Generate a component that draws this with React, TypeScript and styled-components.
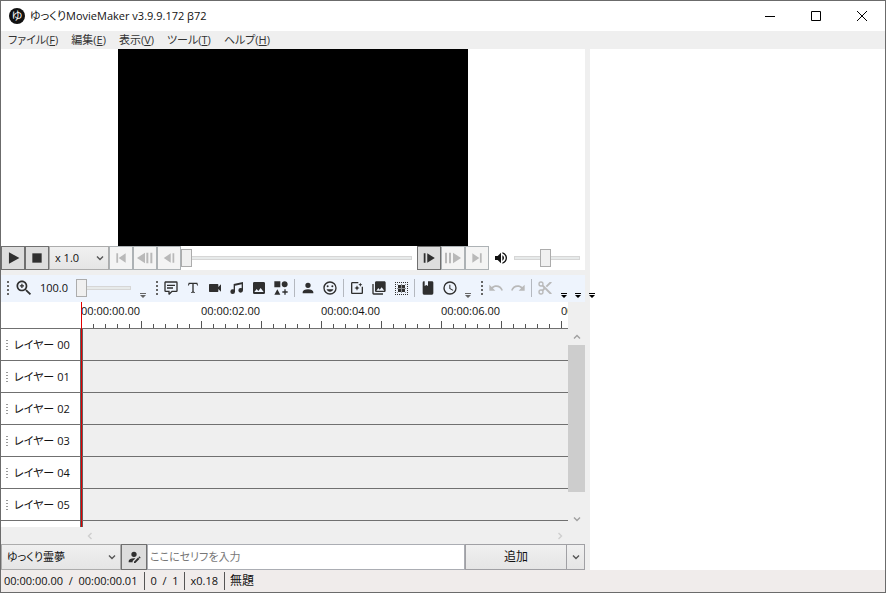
import React from 'react';
import styled, { createGlobalStyle, css } from 'styled-components';

const INK = '#2f2f2f';
const FADED = '#b9b9b9';

const GlobalStyle = createGlobalStyle`
  *, *::before, *::after { box-sizing: border-box; }
  body { margin: 0; }
  button, input, select { font: inherit; color: inherit; margin: 0; padding: 0; border-radius: 0; outline: none; }
`;

const Window = styled.div`
  display: flex;
  flex-direction: column;
  min-height: 100vh;
  border: 1px solid #6b6b6b;
  background: #fff;
  color: #111;
  font-family: 'Open Sans', 'Noto Sans CJK JP', sans-serif;
  font-size: 11px;
  line-height: 16px;
  font-feature-settings: 'palt';
  overflow: hidden;
`;

const TitleBar = styled.header`
  display: flex;
  align-items: center;
  height: 30px;
  padding-left: 8px;
  gap: 5px;
`;

const Title = styled.h1`
  flex: 1;
  margin: 0;
  font-size: 11px;
  font-weight: 400;
  white-space: nowrap;
`;

const Logo = styled.span`
  display: grid;
  place-items: center;
  width: 16px;
  height: 16px;
  border-radius: 50%;
  background: #111;
  color: #fff;
  font-size: 11px;
  line-height: 16px;
`;

const CaptionButton = styled.button`
  display: grid;
  place-items: center;
  width: 46px;
  height: 30px;
  border: 0;
  background: transparent;
`;

const CaptionGroup = styled.div`
  display: flex;
`;

const MenuBar = styled.nav`
  display: flex;
  align-items: center;
  gap: 13px;
  height: 18px;
  padding-left: 7px;
  background: #efefef;
`;

const MenuItem = styled.button`
  border: 0;
  background: transparent;
  color: #333;
  white-space: nowrap;
  line-height: 18px;
`;

const Workspace = styled.main`
  flex: 1;
  display: grid;
  grid-template-columns: minmax(0, 584fr) 5px minmax(0, 295fr);
`;

const Editor = styled.div`
  display: flex;
  flex-direction: column;
  min-width: 0;
  background: #efefef;
`;

const Splitter = styled.div`
  background: #efefef;
`;

const Properties = styled.aside`
  background: #fff;
`;

const Preview = styled.div`
  display: flex;
  justify-content: center;
  background: #fff;
`;

const Screen = styled.div`
  height: 197px;
  aspect-ratio: 16 / 9;
  background: #000;
`;

const Transport = styled.div`
  display: flex;
  align-items: center;
  height: 24px;
  margin-bottom: 5px;
  padding-right: 5px;
  background: #fff;
`;

const TransportButton = styled.button`
  display: grid;
  place-items: center;
  flex: none;
  width: 24px;
  height: 24px;
  border: 1px solid #707070;
  background: #ddd;
  color: ${INK};
  &:disabled {
    border-color: #adb2b5;
    background: #f4f4f4;
    color: ${FADED};
  }
`;

const SelectBox = styled.span<{ $w: number }>`
  position: relative;
  display: flex;
  flex: none;
  align-self: stretch;
  width: ${p => p.$w}px;
  & > svg {
    position: absolute;
    right: 5px;
    top: 0;
    bottom: 0;
    margin: auto;
    color: #555;
    pointer-events: none;
  }
`;

const Select = styled.select`
  appearance: none;
  width: 100%;
  padding-left: 5px;
  border: 1px solid #acacac;
  background: linear-gradient(#f0f0f0, #e5e5e5);
`;

const Range = styled.input<{ $w?: number }>`
  appearance: none;
  height: 18px;
  min-width: 0;
  background: transparent;
  ${p => (p.$w ? css`flex: none; width: ${p.$w}px;` : css`flex: 1;`)}
  &::-webkit-slider-runnable-track {
    height: 4px;
    border: 1px solid #d6d6d6;
    background: #e7eaea;
  }
  &::-webkit-slider-thumb {
    appearance: none;
    width: 11px;
    height: 18px;
    margin: -8px -1px 0;
    border: 1px solid #acacac;
    background: #f0f0f0;
  }
`;

const Seek = styled.div`
  display: flex;
  flex: 1;
  padding-right: 5px;
`;

const Volume = styled.div`
  display: flex;
  align-items: center;
  gap: 5px;
  padding-left: 4px;
`;

const ToolBar = styled.div`
  position: relative;
  z-index: 1;
  display: flex;
  align-items: center;
  height: 27px;
  padding-bottom: 1px;
  background: #eef4fd;
  white-space: nowrap;
  & > * { flex: none; }
`;

const Grip = styled.span`
  width: 10px;
  height: 14px;
  padding-left: 6px;
  &::before {
    content: '';
    display: block;
    width: 2px;
    height: 14px;
    background: repeating-linear-gradient(#666 0 2px, transparent 2px 4px);
  }
`;

const ToolButton = styled.button`
  display: grid;
  place-items: center;
  width: 22px;
  height: 22px;
  border: 0;
  background: transparent;
  color: ${INK};
  &:disabled { color: ${FADED}; }
`;

const ZoomGroup = styled.label`
  display: flex;
  align-items: center;
  width: 125px;
  padding-left: 2px;
`;

const ZoomValue = styled.span`
  width: 41px;
  padding-left: 5px;
`;

const Divider = styled.span`
  width: 5px;
  height: 18px;
  padding-left: 2px;
  &::before {
    content: '';
    display: block;
    width: 1px;
    height: 18px;
    background: #b4b8bf;
  }
`;

const OverflowButton = styled.button<{ $dark?: boolean }>`
  display: flex;
  align-items: flex-end;
  justify-content: center;
  width: 14px;
  height: 22px;
  border: 0;
  background: transparent;
  color: ${p => (p.$dark ? '#000' : '#666')};
`;

const OverflowRow = styled.div`
  display: flex;
  padding-left: 1px;
`;

const Timeline = styled.section`
  flex: 1;
  display: grid;
  grid-template-columns: minmax(0, 1fr) 17px;
  grid-template-rows: minmax(225px, 1fr) 17px;
`;

const Tracks = styled.div`
  display: grid;
  grid-template-columns: 79px minmax(0, 1fr);
  grid-template-rows: 27px repeat(6, 32px) minmax(6px, 1fr);
  position: relative;
  overflow: hidden;
`;

const Corner = styled.div`
  background: #fff;
  border-bottom: 1px solid #707070;
`;

const Ruler = styled.div`
  display: flex;
  overflow: hidden;
  padding-left: 1px;
  background: #fff;
  border-bottom: 1px solid #707070;
`;

const RulerSpan = styled.div`
  display: flex;
  flex: none;
  flex-direction: column;
  justify-content: space-between;
  width: 120px;
  line-height: 18px;
`;

const Ticks = styled.div`
  display: flex;
  align-items: flex-end;
  height: 7px;
`;

const Tick = styled.span<{ $major: boolean }>`
  width: 12px;
  height: ${p => (p.$major ? 7 : 4)}px;
  border-left: 1px solid #555;
`;

const LayerHead = styled.div`
  display: flex;
  align-items: center;
  gap: 6px;
  padding-left: 5px;
  background: #fff;
  border-bottom: 1px solid #707070;
  white-space: nowrap;
  &::before {
    content: '';
    width: 2px;
    height: 10px;
    background: repeating-linear-gradient(#999 0 1px, transparent 1px 3px);
  }
`;

const Lane = styled.div`
  border-bottom: 1px solid #707070;
  border-left: 3px solid #606060;
`;

const LastHead = styled.div`
  background: #fff;
`;

const LastLane = styled.div`
  border-left: 3px solid #606060;
`;

const Playhead = styled.div`
  position: absolute;
  left: 80px;
  top: 0;
  bottom: 0;
  width: 1px;
  background: #e00000;
`;

const VScroll = styled.div`
  display: flex;
  flex-direction: column;
  padding-top: 26px;
`;

const VTrack = styled.div`
  flex: 1;
  display: flex;
  flex-direction: column;
  padding-bottom: 18px;
`;

const VThumb = styled.div`
  flex: 1;
  background: #cdcdcd;
`;

const HScroll = styled.div`
  display: flex;
  justify-content: space-between;
  padding-left: 80px;
`;

const ScrollButton = styled.button<{ $faint?: boolean }>`
  display: grid;
  place-items: center;
  width: 17px;
  height: 17px;
  border: 0;
  background: transparent;
  color: ${p => (p.$faint ? '#cfcfcf' : '#a0a0a0')};
`;

const SpeechRow = styled.form`
  display: flex;
  height: 26px;
`;

const SpeechInput = styled.input`
  flex: 1;
  min-width: 0;
  padding-left: 2px;
  border: 1px solid #abadb3;
  background: #fff;
  font-feature-settings: 'palt';
  &::placeholder { color: #777; opacity: 1; }
`;

const EditVoice = styled.button`
  display: grid;
  place-items: center;
  width: 26px;
  border: 1px solid #707070;
  background: #ddd;
  color: ${INK};
`;

const AddButton = styled.button<{ $w: number }>`
  display: grid;
  place-items: center;
  width: ${p => p.$w}px;
  border: 1px solid #a0a0a4;
  background: linear-gradient(#f0f0f0, #e5e5e5);
  font-size: 12px;
  & + & { border-left: 0; color: #555; }
`;

const StatusBar = styled.footer`
  display: flex;
  align-items: center;
  height: 22px;
  background: #f0eceb;
  white-space: pre;
`;

const StatusItem = styled.span<{ $title?: boolean }>`
  padding: 0 7px 0 3px;
  line-height: 18px;
  font-size: ${p => (p.$title ? 12 : 11)}px;
  & + & { border-left: 1px solid #555; padding: 0 6px 0 5px; }
`;

const ICONS = {
  zoom: 'M15.5 14h-.79l-.28-.27C15.41 12.59 16 11.11 16 9.5 16 5.91 13.09 3 9.5 3S3 5.91 3 9.5 5.91 16 9.5 16c1.61 0 3.09-.59 4.23-1.57l.27.28v.79l5 4.99L20.49 19l-4.99-5zm-6 0C7.01 14 5 11.99 5 9.5S7.01 5 9.5 5 14 7.01 14 9.5 11.99 14 9.5 14zM10.250 7h-1.500v1.750H7v1.500h1.750V12h1.500v-1.750H12v-1.500h-1.750z',
  comment: 'M9,22A1,1 0 0,1 8,21V18H4A2,2 0 0,1 2,16V4C2,2.89 2.9,2 4,2H20A2,2 0 0,1 22,4V16A2,2 0 0,1 20,18H13.9L10.2,21.71C10,21.9 9.75,22 9.5,22V22H9M10,16V19.08L13.08,16H20V4H4V16H10M6,7H18V9H6V7M6,11H15V13H6V11Z',
  text: 'M18.5,4L19.66,8.35L18.7,8.61C18.25,7.74 17.79,6.87 17.26,6.43C16.73,6 16.11,6 15.5,6H13V16.5C13,17 13,17.5 13.33,17.75C13.67,18 14.33,18 15,18V19H9V18C9.67,18 10.33,18 10.67,17.75C11,17.5 11,17 11,16.5V6H8.5C7.89,6 7.27,6 6.74,6.43C6.21,6.87 5.75,7.74 5.3,8.61L4.34,8.35L5.5,4H18.5Z',
  video: 'M17,10.5V7A1,1 0 0,0 16,6H4A1,1 0 0,0 3,7V17A1,1 0 0,0 4,18H16A1,1 0 0,0 17,17V13.5L21,17.5V6.5L17,10.5Z',
  music: 'M21,3V15.5A3.5,3.5 0 0,1 17.5,19A3.5,3.5 0 0,1 14,15.5A3.5,3.5 0 0,1 17.5,12C18.04,12 18.55,12.12 19,12.34V6.47L9,8.6V17.5A3.5,3.5 0 0,1 5.5,21A3.5,3.5 0 0,1 2,17.5A3.5,3.5 0 0,1 5.5,14C6.04,14 6.55,14.12 7,14.34V6L21,3Z',
  image: 'M8.5,13.5L11,16.5L14.5,12L19,18H5M21,19V5C21,3.89 20.1,3 19,3H5A2,2 0 0,0 3,5V19A2,2 0 0,0 5,21H19A2,2 0 0,0 21,19Z',
  shape: 'M2,2H11V11H2V2M17.5,2C20,2 22,4 22,6.5C22,9 20,11 17.5,11C15,11 13,9 13,6.5C13,4 15,2 17.5,2M6.5,14L11,22H2L6.5,14M19,17H22V19H19V22H17V19H14V17H17V14H19V17Z',
  person: 'M12,4A4,4 0 0,1 16,8A4,4 0 0,1 12,12A4,4 0 0,1 8,8A4,4 0 0,1 12,4M12,14C16.42,14 20,15.79 20,18V20H4V18C4,15.79 7.58,14 12,14Z',
  face: 'M12,17.5C14.33,17.5 16.3,16.04 17.11,14H6.89C7.69,16.04 9.67,17.5 12,17.5M8.5,11A1.5,1.5 0 0,0 10,9.5A1.5,1.5 0 0,0 8.500,8A1.5,1.5 0 0,0 7,9.5A1.5,1.5 0 0,0 8.5,11M15.5,11A1.5,1.5 0 0,0 17,9.5A1.5,1.5 0 0,0 15.5,8A1.5,1.5 0 0,0 14,9.5A1.5,1.5 0 0,0 15.5,11M12,20A8,8 0 0,1 4,12A8,8 0 0,1 12,4A8,8 0 0,1 20,12A8,8 0 0,1 12,20M12,2C6.47,2 2,6.5 2,12A10,10 0 0,0 12,22A10,10 0 0,0 22,12A10,10 0 0,0 12,2Z',
  effect: 'M19.02 10v9H5V5h9V3H5.020c-1.100 0-2 .9-2 2v14c0 1.100.9 2 2 2H19c1.100 0 2-.9 2-2v-9h-1.980zM17 10l.94-2.060L20 7l-2.060-.94L17 4l-.94 2.060L14 7l2.060.94zM13.250 10.750L12 8l-1.250 2.750L8 12l2.750 1.250L12 16l1.250-2.750L16 12z',
  library: 'M22 16V4c0-1.100-.9-2-2-2H8c-1.100 0-2 .9-2 2v12c0 1.100.9 2 2 2h12c1.100 0 2-.9 2-2zm-11-4l2.030 2.710L16 11l4 5H8l3-4zM2 6v14c0 1.100.9 2 2 2h14v-2H4V6H2z',
  book: 'M18,22A2,2 0 0,0 20,20V4C20,2.89 19.1,2 18,2H12V9L9.5,7.5L7,9V2H6A2,2 0 0,0 4,4V20A2,2 0 0,0 6,22H18Z',
  clock: 'M12,20A8,8 0 0,0 20,12A8,8 0 0,0 12,4A8,8 0 0,0 4,12A8,8 0 0,0 12,20M12,2A10,10 0 0,1 22,12A10,10 0 0,1 12,22C6.47,22 2,17.5 2,12A10,10 0 0,1 12,2M12.5,7V12.25L17,14.92L16.25,16.15L11,13V7H12.5Z',
  undo: 'M12.5,8C9.85,8 7.45,9 5.6,10.6L2,7V16H11L7.38,12.38C8.77,11.22 10.54,10.5 12.5,10.5C16.04,10.5 19.05,12.81 20.1,16L22.47,15.22C21.08,11.03 17.15,8 12.5,8Z',
  redo: 'M18.4,10.6C16.55,9 14.15,8 11.5,8C6.85,8 2.92,11.03 1.54,15.22L3.9,16C4.95,12.81 7.95,10.5 11.5,10.5C13.45,10.5 15.23,11.22 16.62,12.38L13,16H22V7L18.4,10.6Z',
  cut: 'M19,3L13,9L15,11L22,4V3M12,12.5A0.5,0.5 0 0,1 11.5,12A0.5,0.5 0 0,1 12,11.5A0.5,0.5 0 0,1 12.5,12A0.5,0.5 0 0,1 12,12.5M6,20A2,2 0 0,1 4,18C4,16.89 4.9,16 6,16A2,2 0 0,1 8,18C8,19.11 7.1,20 6,20M6,8A2,2 0 0,1 4,6C4,4.89 4.9,4 6,4A2,2 0 0,1 8,6C8,7.11 7.1,8 6,8M9.64,7.64C9.87,7.14 10,6.59 10,6A4,4 0 0,0 6,2A4,4 0 0,0 2,6A4,4 0 0,0 6,10C6.59,10 7.14,9.87 7.64,9.64L10,12L7.64,14.36C7.14,14.13 6.59,14 6,14A4,4 0 0,0 2,18A4,4 0 0,0 6,22A4,4 0 0,0 10,18C10,17.41 9.87,16.86 9.64,16.36L12,14L19,21H22V20L9.64,7.64Z',
  volume: 'M14,3.23V5.29C16.89,6.15 19,8.83 19,12C19,15.17 16.89,17.84 14,18.7V20.77C18,19.86 21,16.28 21,12C21,7.72 18,4.14 14,3.23M16.5,12C16.5,10.23 15.5,8.71 14,7.97V16C15.5,15.29 16.5,13.76 16.5,12M3,9V15H7L12,20V4L7,9H3Z',
  voice: 'M21.7,13.35L20.7,14.35L18.65,12.3L19.65,11.3C19.86,11.08 20.21,11.08 20.42,11.3L21.7,12.58C21.92,12.79 21.92,13.14 21.7,13.35M12,18.94L18.06,12.88L20.11,14.93L14.06,21H12V18.94M12,14C7.58,14 4,15.79 4,18V20H10V18.11L14,14.11C13.34,14.03 12.67,14 12,14M12,4A4,4 0 0,0 8,8A4,4 0 0,0 12,12A4,4 0 0,0 16,8A4,4 0 0,0 12,4Z',
  play: 'M5 2v20l18-10z',
  stop: 'M4 4h16v16H4z',
  first: 'M4 4h3v16H4zM20 4v16L8 12z',
  back: 'M12 4v16L0 12zM14 4h3v16h-3zM20 4h3v16h-3z',
  frameBack: 'M15 4v16L3 12zM18 4h3v16h-3z',
  frameNext: 'M3 4h3v16H3zM9 4v16l13-8z',
  forward: 'M0 4h3v16H0zM6 4h3v16H6zM12 4v16l12-8z',
  last: 'M4 4v16l12-8zM17 4h3v16h-3z',
};

type IconName = keyof typeof ICONS;

const Icon = ({ name, size = 16 }: { name: IconName; size?: number }) => (
  <svg width={size} height={size} viewBox="0 0 24 24" fill="currentColor" aria-hidden="true">
    <path d={ICONS[name]} />
  </svg>
);

const GroupIcon = () => (
  <svg width="16" height="16" viewBox="0 0 16 16" fill="currentColor" aria-hidden="true">
    {[2, 4, 6, 8, 10, 12, 14].map(p => (
      <path key={p} d={`M${p} 2h1v1h-1zM${p} 14h1v1h-1zM2 ${p}h1v1h-1zM14 ${p}h1v1h-1z`} />
    ))}
    <path d="M5 5h3v3H5zM9 5h3v3H9zM5 9h3v3H5zM9 9h3v3H9z" />
    <path opacity=".5" d="M8 4h1v9H8zM4 8h9v1H4zM4 4h1v1H4zM12 4h1v1h-1zM4 12h1v1H4zM12 12h1v1h-1z" />
  </svg>
);

const TURN = { down: 0, up: 180, left: 90, right: 270 };

const Chevron = ({ to = 'down', size = 8 }: { to?: keyof typeof TURN; size?: number }) => (
  <svg width={size} height={size} viewBox="0 0 8 8" fill="none" stroke="currentColor" strokeWidth="1.400" aria-hidden="true">
    <path d="M1 2.500l3 3 3-3" transform={`rotate(${TURN[to]} 4 4)`} />
  </svg>
);

const Overflow = ({ dark }: { dark?: boolean }) => (
  <OverflowButton $dark={dark} aria-label="ツールバー オプション">
    <svg width="8" height="7" viewBox="0 0 8 7" fill="currentColor" aria-hidden="true">
      <path d="M1 1h6v1H1zM1 3h6L4 6z" />
    </svg>
  </OverflowButton>
);

const Tool = ({ name, label, disabled, size }: { name: IconName; label: string; disabled?: boolean; size?: number }) => (
  <ToolButton aria-label={label} disabled={disabled}>
    <Icon name={name} size={size} />
  </ToolButton>
);

const Step = ({ name, label, disabled, size = 14 }: { name: IconName; label: string; disabled?: boolean; size?: number }) => (
  <TransportButton aria-label={label} disabled={disabled}>
    <Icon name={name} size={size} />
  </TransportButton>
);

const MENUS = [['ファイル', 'F'], ['編集', 'E'], ['表示', 'V'], ['ツール', 'T'], ['ヘルプ', 'H']];
const TIMES = ['00:00:00.00', '00:00:02.00', '00:00:04.00', '00:00:06.00', '00:00:08.00'];
const LAYERS = ['00', '01', '02', '03', '04', '05'];

export default function App() {
  return (
    <Window>
      <GlobalStyle />
      <TitleBar>
        <Logo aria-hidden="true">ゆ</Logo>
        <Title>ゆっくりMovieMaker v3.9.9.172 β72</Title>
        <CaptionGroup>
          <CaptionButton aria-label="最小化">
            <svg width="10" height="10" stroke="#000"><path d="M0 5.500h10" /></svg>
          </CaptionButton>
          <CaptionButton aria-label="最大化">
            <svg width="10" height="10" fill="none" stroke="#000"><path d="M.5.5h9v9h-9z" /></svg>
          </CaptionButton>
          <CaptionButton aria-label="閉じる">
            <svg width="10" height="10" stroke="#000"><path d="M0 0l10 10M10 0L0 10" /></svg>
          </CaptionButton>
        </CaptionGroup>
      </TitleBar>
      <MenuBar>
        {MENUS.map(([name, key]) => (
          <MenuItem key={key}>{name}(<u>{key}</u>)</MenuItem>
        ))}
      </MenuBar>
      <Workspace>
        <Editor>
          <Preview><Screen /></Preview>
          <Transport>
            <Step name="play" label="再生" />
            <Step name="stop" label="停止" />
            <SelectBox $w={60}>
              <Select aria-label="再生速度"><option>x 1.0</option></Select>
              <Chevron />
            </SelectBox>
            <Step name="first" label="先頭へ" disabled />
            <Step name="back" label="戻る" size={16} disabled />
            <Step name="frameBack" label="1フレーム戻る" disabled />
            <Seek>
              <Range type="range" aria-label="再生位置" defaultValue={0} />
            </Seek>
            <Step name="frameNext" label="1フレーム進む" />
            <Step name="forward" label="進む" size={16} disabled />
            <Step name="last" label="末尾へ" disabled />
            <Volume>
              <Icon name="volume" />
              <Range $w={66} type="range" aria-label="音量" defaultValue={49} />
            </Volume>
          </Transport>
          <ToolBar>
            <Grip />
            <ZoomGroup>
              <Tool name="zoom" label="拡大率" size={20} />
              <ZoomValue>100.0</ZoomValue>
              <Range $w={55} type="range" aria-label="拡大率" defaultValue={0} />
            </ZoomGroup>
            <Overflow />
            <Grip />
            <Tool name="comment" label="ボイス" />
            <Tool name="text" label="テキスト" />
            <Tool name="video" label="動画" />
            <Tool name="music" label="音声" />
            <Tool name="image" label="画像" />
            <Tool name="shape" label="図形" />
            <Divider />
            <Tool name="person" label="立ち絵" />
            <Tool name="face" label="表情" />
            <Divider />
            <Tool name="effect" label="エフェクト" />
            <Tool name="library" label="画面の複製" />
            <ToolButton aria-label="グループ制御"><GroupIcon /></ToolButton>
            <Divider />
            <Tool name="book" label="テンプレート" />
            <Tool name="clock" label="履歴" />
            <Overflow />
            <Grip />
            <Tool name="undo" label="元に戻す" disabled />
            <Tool name="redo" label="やり直し" disabled />
            <Divider />
            <Tool name="cut" label="切り取り" disabled />
            <OverflowRow>
              <Overflow dark />
              <Overflow dark />
              <Overflow dark />
            </OverflowRow>
          </ToolBar>
          <Timeline>
            <Tracks>
              <Corner />
              <Ruler>
                {TIMES.map(time => (
                  <RulerSpan key={time}>
                    <span>{time}</span>
                    <Ticks>
                      {Array.from({ length: 10 }, (_, i) => <Tick key={i} $major={i % 5 === 0} />)}
                    </Ticks>
                  </RulerSpan>
                ))}
              </Ruler>
              {LAYERS.map(id => (
                <React.Fragment key={id}>
                  <LayerHead>レイヤー {id}</LayerHead>
                  <Lane />
                </React.Fragment>
              ))}
              <LastHead />
              <LastLane />
              <Playhead />
            </Tracks>
            <VScroll>
              <ScrollButton aria-label="上へ"><Chevron to="up" /></ScrollButton>
              <VTrack><VThumb /></VTrack>
              <ScrollButton aria-label="下へ"><Chevron /></ScrollButton>
            </VScroll>
            <HScroll>
              <ScrollButton $faint aria-label="左へ"><Chevron to="left" /></ScrollButton>
              <ScrollButton $faint aria-label="右へ"><Chevron to="right" /></ScrollButton>
            </HScroll>
          </Timeline>
          <SpeechRow onSubmit={e => e.preventDefault()}>
            <SelectBox $w={120}>
              <Select aria-label="キャラクター"><option>ゆっくり霊夢</option></Select>
              <Chevron />
            </SelectBox>
            <EditVoice type="button" aria-label="キャラクター編集"><Icon name="voice" /></EditVoice>
            <SpeechInput aria-label="セリフ" placeholder="ここにセリフを入力" />
            <AddButton $w={102}>追加</AddButton>
            <AddButton $w={18} type="button" aria-label="追加オプション"><Chevron /></AddButton>
          </SpeechRow>
        </Editor>
        <Splitter />
        <Properties />
      </Workspace>
      <StatusBar>
        <StatusItem>00:00:00.00  /  00:00:00.01</StatusItem>
        <StatusItem>0  /  1</StatusItem>
        <StatusItem>x0.18</StatusItem>
        <StatusItem $title>無題</StatusItem>
      </StatusBar>
    </Window>
  );
}
